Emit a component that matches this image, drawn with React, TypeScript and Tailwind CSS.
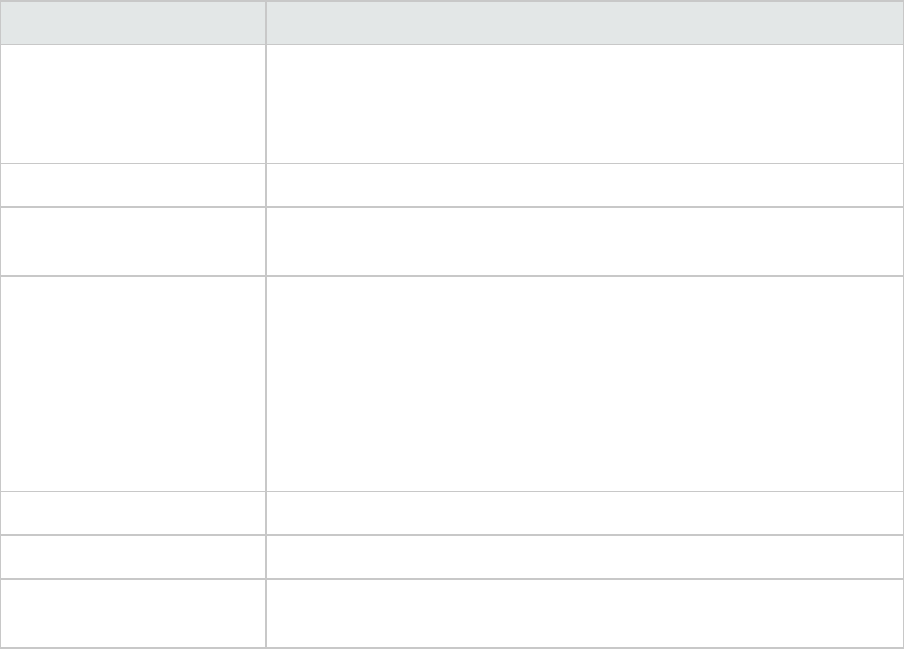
import React from "react";

const rows = [
    { h: 119, thick: false },
    { h: 44, thick: true },
    { h: 69, thick: true },
    { h: 215, thick: false },
    { h: 44, thick: true },
    { h: 44, thick: true },
];

export default function App() {
    return (
        <div className="w-[904px] h-[649px] bg-white font-['Liberation_Sans',sans-serif]">
            <div className="flex flex-col border-t-2 border-b-2 border-x border-[#c8c8c8]">
                <div className="flex h-[43px] bg-[#e3e7e7] border-b border-[#c8c8c8]">
                    <div className="w-[266px] border-r-2 border-[#c8c8c8]" />
                    <div className="flex-1" />
                </div>
                {rows.map((r, i) => (
                    <div
                        key={i}
                        className={`flex border-[#c8c8c8] ${r.thick ? "border-b-2" : "border-b"}`}
                        style={{ height: r.h }}
                    >
                        <div className="w-[266px] border-r-2 border-[#c8c8c8]" />
                        <div className="flex-1" />
                    </div>
                ))}
                <div className="flex h-[67px]">
                    <div className="w-[266px] border-r-2 border-[#c8c8c8]" />
                    <div className="flex-1" />
                </div>
            </div>
        </div>
    );
}
